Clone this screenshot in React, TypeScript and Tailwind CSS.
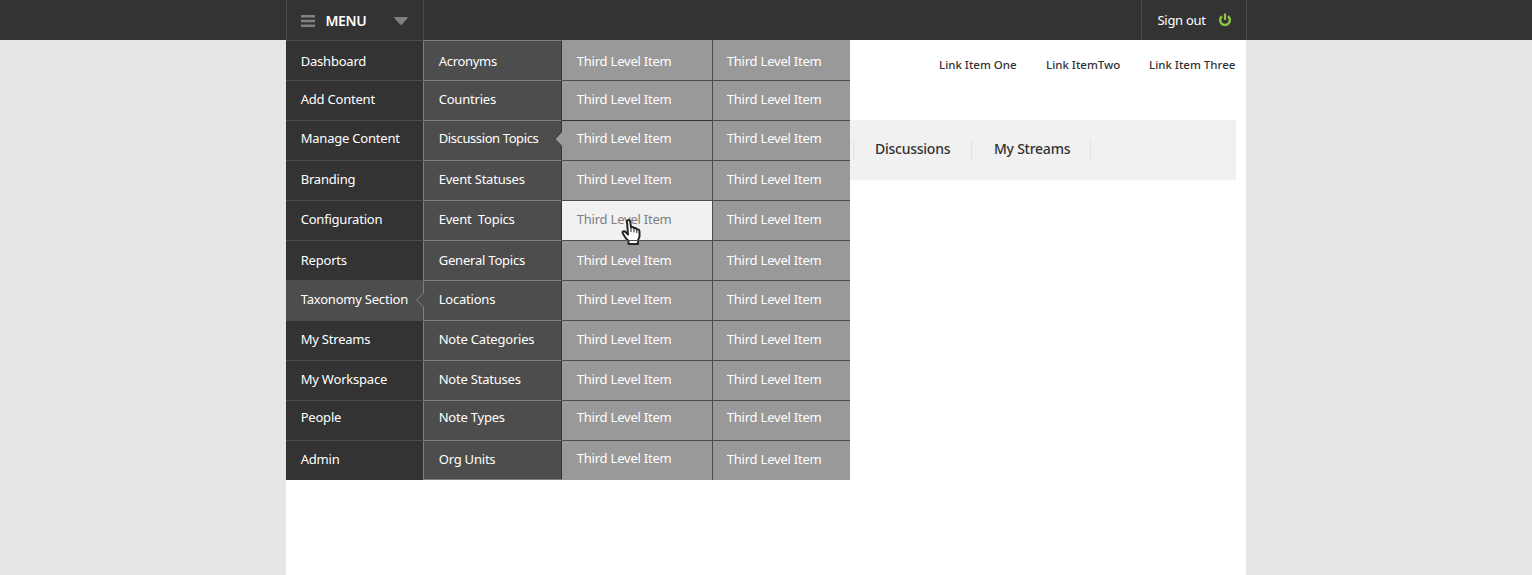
import React from "react";

type Row = { first: string; second: string; pad: string; track?: string };

const rows: Row[] = [
  { first: "Dashboard", second: "Acronyms", pad: "pt-[10px]", track: "tracking-[-0.3px]" },
  { first: "Add Content", second: "Countries", pad: "pt-[8px]" },
  { first: "Manage Content", second: "Discussion Topics", pad: "pt-[7px]", track: "tracking-[-0.4px]" },
  { first: "Branding", second: "Event Statuses", pad: "pt-[8px]" },
  { first: "Configuration", second: "Event  Topics", pad: "pt-[8px]" },
  { first: "Reports", second: "General Topics", pad: "pt-[9px]" },
  { first: "Taxonomy Section", second: "Locations", pad: "pt-[8px]" },
  { first: "My Streams", second: "Note Categories", pad: "pt-[8px]" },
  { first: "My Workspace", second: "Note Statuses", pad: "pt-[8px]" },
  { first: "People", second: "Note Types", pad: "pt-[6px]" },
  { first: "Admin", second: "Org Units", pad: "pt-[8px]" },
];

function PowerIcon() {
  return (
    <svg width="14" height="14" viewBox="0 0 14 14" fill="none" stroke="#8cc63f">
      <path d="M4 3.200A4.900 4.900 0 1 0 10 3.200" strokeWidth="2.400" />
      <path d="M7 .5V7" strokeWidth="2.200" />
    </svg>
  );
}

function HandCursor() {
  return (
    <svg className="absolute left-[59px] top-[17px]" width="20" height="28" viewBox="0 0 20 28">
      <path
        d="M6 3.500C6 1.500 9 1.500 9.200 3.500L10 9.300c1-.6 2.400-.3 2.900.8 1-.5 2.400 0 2.700 1.100 1.300-.3 2.900.5 2.900 2.300V18.500L17 22.500V26H7.500V23L5 20.500 1.800 15.500C1 13.500 3 12.500 4.500 14L7 16.500Z"
        fill="#fff"
        stroke="#262626"
        strokeWidth="2"
        strokeLinejoin="round"
      />
      <path d="M10 9.500v4.500M13 10.500v4M15.800 11.500v3.500" stroke="#262626" strokeWidth="1" />
    </svg>
  );
}

export default function App() {
  return (
    <div className="h-[575px] w-full overflow-hidden bg-[#e6e6e6] font-['Noto_Sans',sans-serif] text-[13px] leading-[20px] text-white">
      <header className="h-10 bg-[#333]">
        <div className="mx-auto flex h-10 w-[961px] justify-between">
          <div className="flex h-10 w-[138px] items-center border-x border-[#4d4d4d] pl-[14px] pt-[2px]">
            <svg width="14" height="12" viewBox="0 0 14 12" fill="#808080">
              <path d="M0 0h14v2.400H0zM0 4.800h14v2.400H0zM0 9.600h14v2.400H0z" />
            </svg>
            <span className="ml-[11px] w-[68px] text-[14px] font-semibold tracking-[-0.4px]">MENU</span>
            <svg width="14" height="8" viewBox="0 0 14 8" fill="#808080">
              <path d="M1 0h12q1.500 0 .7 1L8 7.500q-1 .8-2 0L.3 1q-.8-1 .7-1Z" />
            </svg>
          </div>
          <div className="flex h-10 w-[106px] items-center border-x border-[#4d4d4d] pl-4">
            <span className="w-[60px] whitespace-nowrap tracking-[-0.3px]">Sign out</span>
            <PowerIcon />
          </div>
        </div>
      </header>

      <main className="mx-auto flex h-[535px] w-[960px] items-start bg-white">
        <nav className="flex h-[440px] w-[564px] shrink-0 whitespace-pre tracking-[-0.21px]">
          <ul className="w-[138px] bg-[#333]">
            {rows.map((row, i) => (
              <li
                key={row.first}
                className={`relative h-10 border-t border-t-[#4d4d4d] border-r border-r-[#808080] pl-[14.700px] ${row.pad} ${i === 6 ? "bg-[#4d4d4d]" : ""}`}
              >
                {row.first}
                {i === 6 && (
                  <svg className="absolute -right-px top-[11px]" width="9" height="16" viewBox="0 0 9 16">
                    <path d="M9 .5 1.500 8 9 15.500" fill="#4d4d4d" stroke="#808080" />
                  </svg>
                )}
              </li>
            ))}
          </ul>
          <ul className="w-[138px] border-b border-[#808080] bg-[#4d4d4d]">
            {rows.map((row, i) => (
              <li
                key={row.second}
                className={`relative border-t border-t-[#808080] border-r border-r-[#333] pl-[14.700px] ${row.pad} ${row.track ?? ""} ${i === 10 ? "h-[39px]" : "h-10"}`}
              >
                {row.second}
                {i === 2 && (
                  <svg className="absolute -right-px top-[10px]" width="8" height="16" viewBox="0 0 8 16">
                    <path d="M8 .5.800 8 8 15.500" fill="#999" stroke="#333" />
                  </svg>
                )}
              </li>
            ))}
          </ul>
          <ul className="w-[151px] border-r border-[#4d4d4d] bg-[#999]">
            {rows.map((row, i) => (
              <li
                key={row.first}
                className={`relative h-10 border-t pl-[14.700px] ${i === 0 ? "border-[#999]" : i === 2 ? "border-[#333]" : "border-[#4d4d4d]"} ${i === 4 ? "bg-[#f1f1f1] text-[#808080]" : ""} ${i === 10 ? "pt-[7px]" : row.pad}`}
              >
                Third Level Item
                {i === 4 && <HandCursor />}
              </li>
            ))}
          </ul>
          <ul className="w-[137px] bg-[#999]">
            {rows.map((row, i) => (
              <li
                key={row.first}
                className={`h-10 border-t pl-[13.700px] ${i === 0 ? "border-[#999]" : "border-[#4d4d4d]"} ${row.pad}`}
              >
                Third Level Item
              </li>
            ))}
          </ul>
        </nav>

        <section className="w-[396px] text-[#333]">
          <div className="flex h-20 whitespace-nowrap pl-[89px] pt-[15px] text-[11.500px] font-medium">
            <a className="w-[107px]">Link Item One</a>
            <a className="w-[103px]">Link ItemTwo</a>
            <a>Link Item Three</a>
          </div>
          <div className="flex h-[60px] w-[386px] items-center bg-[#f1f1f1] pl-[3px] text-[14px] font-medium tracking-[-0.25px]">
            <div className="h-5 border-l border-[#e3e3e3]" />
            <a className="h-5 w-[118px] border-r border-[#e3e3e3] pl-[21px] leading-[18px]">Discussions</a>
            <a className="h-5 w-[119px] border-r border-[#e3e3e3] pl-[22px] leading-[18px]">My Streams</a>
          </div>
        </section>
      </main>
    </div>
  );
}
